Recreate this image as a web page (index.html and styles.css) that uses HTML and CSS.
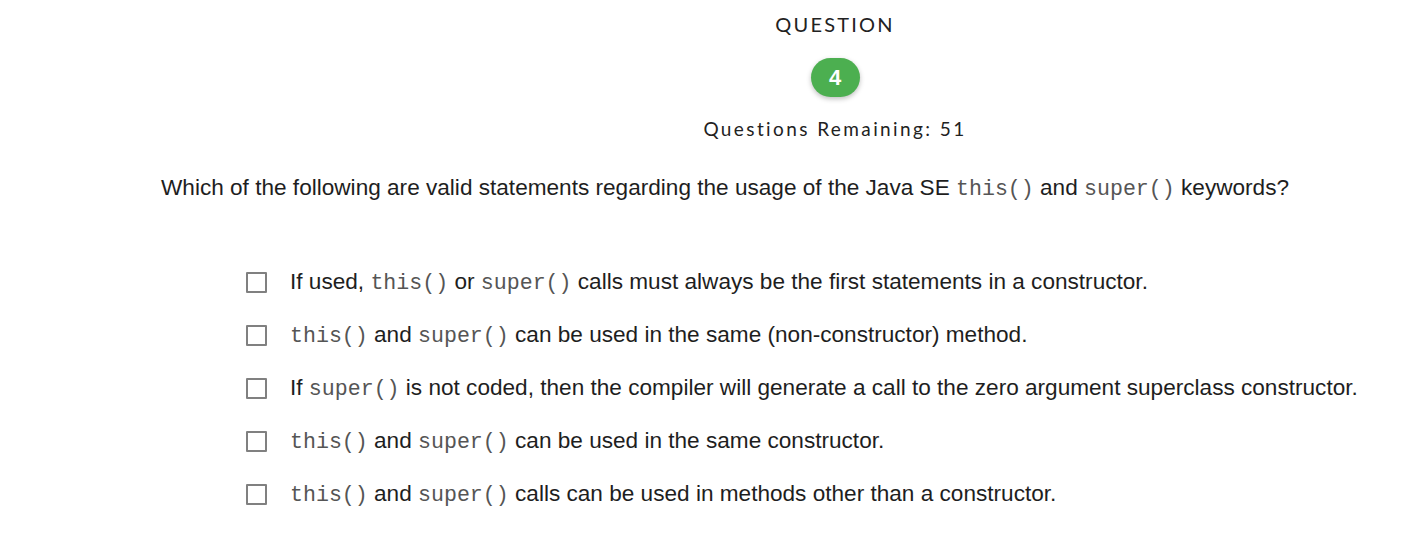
FILE: index.html
```html
<!DOCTYPE html>
<html>
<head>
<meta charset="utf-8">
<link rel="stylesheet" href="styles.css">
</head>
<body>
<div class="page">
  <header class="head">
    <div class="label">QUESTION</div>
    <div class="badge">4</div>
    <div class="remaining">Questions Remaining: 51</div>
  </header>
  <p class="question">Which of the following are valid statements regarding the usage of the Java SE <code>this()</code> and <code>super()</code> keywords?</p>
  <ul class="options">
    <li class="opt"><span class="box"></span><span class="txt">If used, <code>this()</code> or <code>super()</code> calls must always be the first statements in a constructor.</span></li>
    <li class="opt"><span class="box"></span><span class="txt"><code>this()</code> and <code>super()</code> can be used in the same (non-constructor) method.</span></li>
    <li class="opt"><span class="box"></span><span class="txt">If <code>super()</code> is not coded, then the compiler will generate a call to the zero argument superclass constructor.</span></li>
    <li class="opt"><span class="box"></span><span class="txt"><code>this()</code> and <code>super()</code> can be used in the same constructor.</span></li>
    <li class="opt"><span class="box"></span><span class="txt"><code>this()</code> and <code>super()</code> calls can be used in methods other than a constructor.</span></li>
  </ul>
</div>
</body>
</html>
```
FILE: styles.css
```css
html, body { margin: 0; padding: 0; background: #fff; }
body { font-family: "Liberation Sans", Arial, sans-serif; color: #1e1e1e; }
.page { width: 1405px; }
.head {
  padding-left: 265px;
  display: flex;
  flex-direction: column;
  align-items: center;
  font-family: Lato, "Open Sans", sans-serif;
  color: #222;
}
.label {
  margin-top: 12px;
  font-size: 20px;
  line-height: 24px;
  letter-spacing: 2.2px;
}
.badge {
  margin-top: 22px;
  width: 49px;
  height: 39px;
  border-radius: 20px;
  background: #4caf50;
  color: #fff;
  font-family: "Liberation Sans", Arial, sans-serif;
  font-weight: bold;
  font-size: 22px;
  line-height: 39px;
  text-align: center;
  box-shadow: 0 2px 5px rgba(0,0,0,0.25);
}
.remaining {
  margin-top: 20px;
  font-size: 19px;
  line-height: 24px;
  letter-spacing: 2.4px;
}
.question {
  margin: 34px 0 0 0;
  padding-left: 161px;
  font-size: 22.6px;
  line-height: 26px;
}
code {
  font-family: "Liberation Mono", "Courier New", monospace;
  font-size: 21.6px;
  color: #555;
}
.options {
  list-style: none;
  margin: 67px 0 0 0;
  padding: 0 0 0 246px;
  display: flex;
  flex-direction: column;
  gap: 26px;
}
.opt {
  display: flex;
  align-items: center;
  gap: 23px;
  font-size: 22.6px;
  line-height: 26px;
}
.box {
  width: 17px;
  height: 17px;
  border: 2px solid #808080;
  border-radius: 1px;
  flex: none;
}
```
